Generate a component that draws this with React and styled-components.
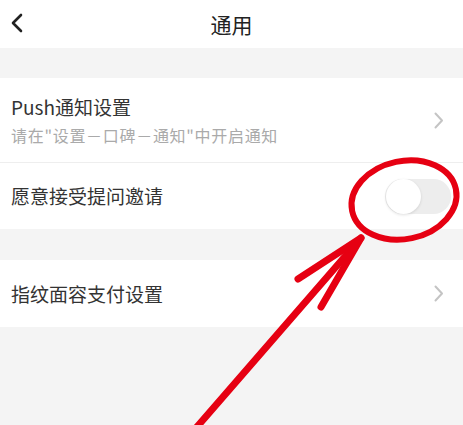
import React from 'react';
import styled, { createGlobalStyle } from 'styled-components';

const GlobalStyle = createGlobalStyle`
  html, body {
    margin: 0;
    padding: 0;
    background: #f4f4f4;
  }
  body {
    font-family: "Noto Sans CJK SC", "Noto Sans", sans-serif;
    color: #333;
  }
`;

const Page = styled.div`
  position: relative;
  width: 463px;
  height: 425px;
  overflow: hidden;
  background: #f4f4f4;
`;

const Header = styled.div`
  height: 48px;
  display: flex;
  align-items: center;
  justify-content: center;
  position: relative;
  background: #fff;
`;

const BackButton = styled.div`
  position: absolute;
  left: 8px;
  top: 12px;
  width: 18px;
  height: 22px;
  display: flex;
  align-items: center;
`;

const Title = styled.div`
  font-size: 21px;
  color: #222;
  line-height: 1;
`;

const Group = styled.div`
  background: #fff;
  margin-top: ${(p) => p.$gap}px;
`;

const Row = styled.div`
  height: ${(p) => p.$height}px;
  display: flex;
  align-items: center;
  justify-content: space-between;
  padding: 0 16px 0 11px;
  box-sizing: border-box;
  border-bottom: ${(p) => (p.$divider ? '1px solid #eeeeee' : 'none')};
`;

const Texts = styled.div`
  display: flex;
  flex-direction: column;
  gap: 7px;
`;

const Label = styled.div`
  font-size: 19px;
  line-height: 22px;
  color: #333;
`;

const Hint = styled.div`
  font-size: 16px;
  line-height: 20px;
  color: #aaa;
  letter-spacing: 0.7px;
`;

const Chevron = styled.svg`
  width: 10px;
  height: 17px;
  margin-right: 3px;
`;

const Toggle = styled.div`
  width: 66px;
  height: 35px;
  border-radius: 18px;
  background: #ededed;
  position: relative;
  margin-right: -4px;
`;

const Knob = styled.div`
  position: absolute;
  left: 1px;
  top: 0px;
  width: 35px;
  height: 35px;
  border-radius: 50%;
  background: #fff;
  box-shadow: 0 1px 3px rgba(0, 0, 0, 0.12);
`;

const Annotation = styled.svg`
  position: absolute;
  left: 0;
  top: 0;
  pointer-events: none;
`;

const RightArrow = () => (
  <Chevron viewBox="0 0 10 17">
    <path d="M1.5 1.5 L8 8.5 L1.5 15.5" fill="none" stroke="#c4c4c4" strokeWidth="2" strokeLinecap="round" strokeLinejoin="round" />
  </Chevron>
);

export default function App() {
  return (
    <Page>
      <GlobalStyle />
      <Header>
        <BackButton>
          <svg width="18" height="22" viewBox="0 0 18 22">
            <path d="M13 3 L5 11 L13 19" fill="none" stroke="#222" strokeWidth="2.6" strokeLinecap="round" strokeLinejoin="round" />
          </svg>
        </BackButton>
        <Title>通用</Title>
      </Header>

      <Group $gap={30}>
        <Row $height={85} $divider>
          <Texts>
            <Label>Push通知设置</Label>
            <Hint>请在"设置－口碑－通知"中开启通知</Hint>
          </Texts>
          <RightArrow />
        </Row>
        <Row $height={66}>
          <Label>愿意接受提问邀请</Label>
          <Toggle>
            <Knob />
          </Toggle>
        </Row>
      </Group>

      <Group $gap={31}>
        <Row $height={67}>
          <Label>指纹面容支付设置</Label>
          <RightArrow />
        </Row>
      </Group>

      <Annotation width="463" height="425" viewBox="0 0 463 425">
        <ellipse cx="404" cy="200" rx="53" ry="39" transform="rotate(-12 404 200)" fill="none" stroke="#e60012" strokeWidth="6" />
        <g fill="none" stroke="#e60012" strokeWidth="7" strokeLinecap="round" strokeLinejoin="round">
          <path d="M196 428 L361 238" />
          <path d="M298 279 L361 238 L321 307" />
        </g>
      </Annotation>
    </Page>
  );
}
